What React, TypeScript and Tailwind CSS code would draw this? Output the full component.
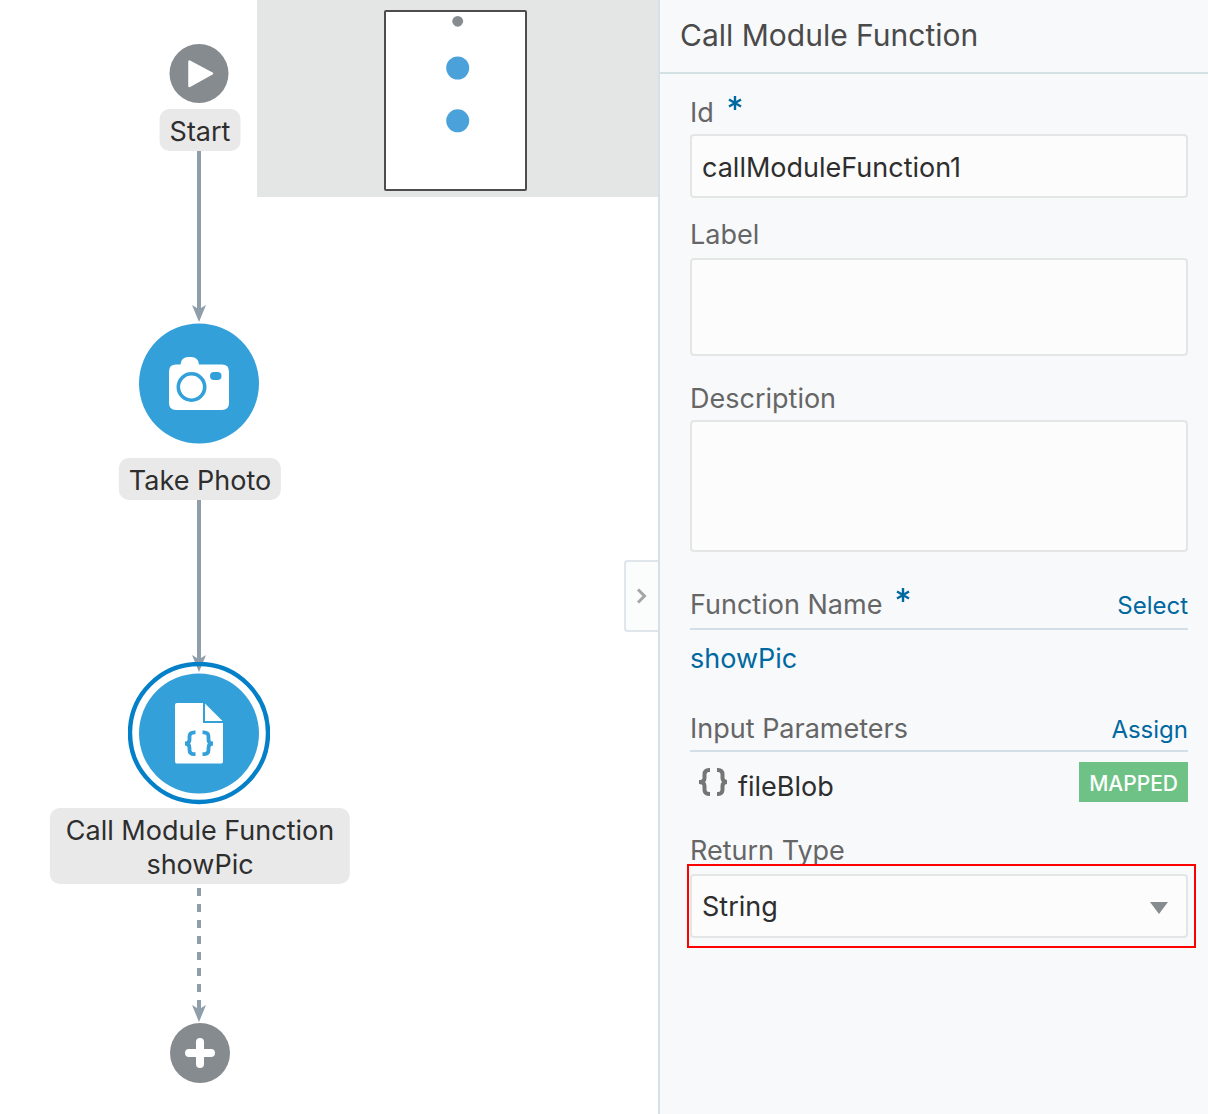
import type { ReactNode } from "react";

const EDGE = "#8f9eaa";

function ArrowHead({ y }: { y: number }) {
  return <path d={`M199 ${y}L192 ${y - 17}L197 ${y - 14}H201L206 ${y - 17}Z`} fill={EDGE} />;
}

function Edges() {
  return (
    <svg className="absolute top-0 left-0" width="400" height="1114" aria-hidden="true">
      <g stroke={EDGE} strokeWidth="4">
        <path d="M199 150V308" />
        <path d="M199 499V658" />
        <path d="M199 888V1010" strokeDasharray="8 8" />
      </g>
      <ArrowHead y={322} />
      <ArrowHead y={672} />
      <ArrowHead y={1022} />
    </svg>
  );
}

function NodeLabel({ className, children }: { className: string; children: ReactNode }) {
  return (
    <div
      className={`absolute left-[200px] -translate-x-1/2 rounded-[10px] bg-[#e9e9e9] pt-[6px] pb-[2px] text-center text-[27px] leading-[34px] whitespace-nowrap text-[#2e2e2e] ${className}`}
    >
      {children}
    </div>
  );
}

function StartNode() {
  return (
    <svg className="absolute top-[43px] left-[169px]" width="60" height="60" viewBox="0 0 60 60" role="img" aria-label="Start">
      <circle cx="30" cy="30.5" r="29.5" fill="#868b8f" />
      <path d="M20.5 18.5V43L43 30.5Z" fill="#fff" stroke="#fff" strokeWidth="2.5" strokeLinejoin="round" />
    </svg>
  );
}

function PhotoNode() {
  return (
    <svg className="absolute top-[323px] left-[139px]" width="120" height="121" viewBox="0 0 120 121" role="img" aria-label="Take Photo">
      <circle cx="60" cy="60.5" r="60" fill="#33a0d9" />
      <path
        d="M37 41.5H41.5Q42 34 49.500 34H52Q59.5 34 60 41.5H83Q90 41.5 90 48.5V80Q90 87 83 87H37Q30 87 30 80V48.5Q30 41.5 37 41.5Z"
        fill="#fff"
      />
      <circle cx="52.500" cy="64" r="13.2" fill="none" stroke="#33a0d9" strokeWidth="3.6" />
      <rect x="71" y="49" width="11.500" height="8" rx="4" fill="#33a0d9" />
    </svg>
  );
}

function FunctionNode() {
  return (
    <svg className="absolute top-[662px] left-[128px]" width="142" height="143" viewBox="0 0 142 143" role="img" aria-label="Call Module Function">
      <circle cx="71" cy="71" r="69" fill="none" stroke="#0480c8" strokeWidth="4.4" />
      <circle cx="71" cy="71.500" r="60" fill="#33a0d9" />
      <path d="M49 41H75V61H95V99.500Q95 101.500 93 101.500H49Q47 101.500 47 99.500V43Q47 41 49 41Z" fill="#fff" />
      <path d="M77 41.500L94.500 59H77Z" fill="#fff" />
      <g fill="none" stroke="#33a0d9" strokeWidth="3.800">
        <path d="M67.500 70.300H66.500Q61.500 70.300 61.500 74.500V78Q61.500 81.500 57 81.500Q61.500 81.500 61.500 86V88Q61.500 92.200 66.500 92.200H67.500" />
        <path d="M74.500 70.300H75.500Q80.500 70.300 80.500 74.500V78Q80.500 81.500 85 81.500Q80.500 81.500 80.500 86V88Q80.500 92.200 75.500 92.200H74.500" />
      </g>
    </svg>
  );
}

function AddNode() {
  return (
    <button type="button" aria-label="Add action" className="absolute top-[1023px] left-[170px] size-[60px] rounded-full bg-[#868b8f]">
      <svg width="60" height="60" viewBox="0 0 60 60" aria-hidden="true">
        <path d="M30 19V41M19 30H41" stroke="#fff" strokeWidth="8" strokeLinecap="round" />
      </svg>
    </button>
  );
}

function MiniMap() {
  return (
    <div className="absolute top-0 right-0 h-[197px] w-[401px] bg-[#e4e6e5]">
      <div className="absolute top-[10px] left-[127px] h-[181px] w-[143px] rounded-xs border-2 border-[#4d4d4d] bg-white">
        <svg width="139" height="177" viewBox="0 0 139 177" aria-hidden="true">
          <circle cx="71.700" cy="9.300" r="5.400" fill="#868b8f" />
          <circle cx="71.700" cy="56" r="11.500" fill="#4ba1da" />
          <circle cx="71.700" cy="108.800" r="11.500" fill="#4ba1da" />
        </svg>
      </div>
    </div>
  );
}

function Canvas() {
  return (
    <main className="relative min-h-[1114px] min-w-[400px] flex-1 overflow-hidden bg-white">
      <MiniMap />
      <Edges />
      <StartNode />
      <NodeLabel className="top-[109px] px-[10px]">Start</NodeLabel>
      <PhotoNode />
      <NodeLabel className="top-[458px] px-[10px]">Take Photo</NodeLabel>
      <FunctionNode />
      <NodeLabel className="top-[808px] px-4">
        Call Module Function
        <br />
        showPic
      </NodeLabel>
      <AddNode />
      <button
        type="button"
        aria-label="Collapse panel"
        className="absolute top-[560px] right-0 flex h-[72px] w-[34px] items-center justify-center rounded-l border-2 border-r-0 border-[#dfe6ec] bg-[#fbfcfc]"
      >
        <svg width="12" height="16" viewBox="0 0 12 16" fill="none" aria-hidden="true">
          <path d="M2 1.500L8.500 8L2 14.500" stroke="#a5a5a5" strokeWidth="3" />
        </svg>
      </button>
    </main>
  );
}

const label = "block text-[27px] leading-[38px] text-[#666]";
const field = "block w-full rounded border-2 border-[#e4e6e5] bg-[#fcfcfc] px-[10px] pt-[3px] text-[27px] text-[#2e2e2e]";
const action = "text-[24px] leading-8 text-[#0068a0]";

function Required() {
  return (
    <svg className="ml-[14px] inline-block -translate-y-3" width="14" height="14" viewBox="0 0 14 14" role="img" aria-label="required">
      <path d="M7 0V14M1 3.500L13 10.500M13 3.500L1 10.500" stroke="#0068a0" strokeWidth="2.400" />
    </svg>
  );
}

function Properties() {
  return (
    <aside className="w-[550px] shrink-0 border-l-2 border-[#d6e0e6] bg-[#f8f9fb]">
      <h1 className="h-[74px] border-b-2 border-[#d3e1e5] px-5 text-[30px] leading-[70px] font-normal text-[#4a4a4a]">
        Call Module Function
      </h1>
      <form className="flex flex-col pt-5 pr-5 pl-[30px]">
        <label htmlFor="id" className={`${label} mb-[2px]`}>
          Id
          <Required />
        </label>
        <input id="id" type="text" defaultValue="callModuleFunction1" className={`${field} h-16`} />

        <label htmlFor="label" className={`${label} mt-[18px] mb-1`}>
          Label
        </label>
        <textarea id="label" className={`${field} h-[98px] resize-none`} />

        <label htmlFor="description" className={`${label} mt-6 mb-[2px]`}>
          Description
        </label>
        <textarea id="description" className={`${field} h-[132px] resize-none`} />

        <div className="mt-[34px] flex items-baseline justify-between border-b-2 border-[#d3dfe6] pb-1">
          <h2 className={label}>
            Function Name
            <Required />
          </h2>
          <button type="button" className={action}>
            Select
          </button>
        </div>
        <a href="#showPic" className="mt-[10px] self-start text-[27px] leading-[38px] text-[#0068a0]">
          showPic
        </a>

        <div className="mt-8 flex items-baseline justify-between border-b-2 border-[#d3dfe6] pb-[2px]">
          <h2 className={label}>Input Parameters</h2>
          <button type="button" className={action}>
            Assign
          </button>
        </div>
        <div className="mt-[10px] flex h-10 items-center">
          <svg className="ml-[9px]" width="28" height="30" viewBox="0 0 28 30" fill="none" stroke="#757575" strokeWidth="4" aria-hidden="true">
            <path d="M11 3H10Q5.500 3 5.500 7.500V11Q5.500 15 0 15Q5.500 15 5.500 19V22.500Q5.500 27 10 27H11" />
            <path d="M18 3H19Q23.500 3 23.500 7.500V11Q23.500 15 29 15Q23.500 15 23.500 19V22.500Q23.500 27 19 27H18" />
          </svg>
          <span className="mt-[10px] ml-[11px] text-[27px] leading-8 text-[#2e2e2e]">fileBlob</span>
          <span className="ml-auto bg-[#6fc286] px-[10px] pt-1 text-[21px] leading-9 font-medium text-white">MAPPED</span>
        </div>

        <label htmlFor="return-type" className={`${label} mt-[30px] h-8`}>
          Return Type
        </label>
        <div className="-mr-2 -ml-[3px] border-2 border-[#f00] py-2 pr-[6px] pl-px">
          <div className="relative">
            <select id="return-type" className={`${field} h-16 appearance-none`} defaultValue="String">
              <option>String</option>
            </select>
            <svg className="pointer-events-none absolute top-7 right-5" width="18" height="12" viewBox="0 0 18 12" aria-hidden="true">
              <path d="M0 0H18L9 12Z" fill="#868b8f" />
            </svg>
          </div>
        </div>
      </form>
    </aside>
  );
}

export default function App() {
  return (
    <div className="flex min-h-screen font-[Inter,'Liberation_Sans',sans-serif]">
      <Canvas />
      <Properties />
    </div>
  );
}
